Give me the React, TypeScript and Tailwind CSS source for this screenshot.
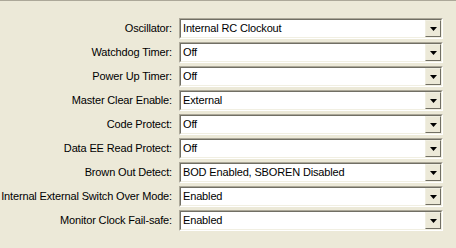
const rows: [string, string][] = [
  ['Oscillator:', 'Internal RC Clockout'],
  ['Watchdog Timer:', 'Off'],
  ['Power Up Timer:', 'Off'],
  ['Master Clear Enable:', 'External'],
  ['Code Protect:', 'Off'],
  ['Data EE Read Protect:', 'Off'],
  ['Brown Out Detect:', 'BOD Enabled, SBOREN Disabled'],
  ['Internal External Switch Over Mode:', 'Enabled'],
  ['Monitor Clock Fail-safe:', 'Enabled'],
]

function Combo({ value }: { value: string }) {
  return (
    <div className="w-[264px] h-[21px] border border-t-[#ACA899] border-l-[#ACA899] border-b-white border-r-white">
      <div className="h-full flex bg-white border border-t-[#716F64] border-l-[#716F64] border-b-[#F1EFE2] border-r-[#F1EFE2]">
        <div className="flex-1 pl-[2px] leading-[17px] whitespace-nowrap overflow-hidden">{value}</div>
        {/* dropdown button */}
        <div className="w-[16px] h-full bg-[#ECE9D8] border border-t-[#F1EFE2] border-l-[#F1EFE2] border-b-[#716F64] border-r-[#716F64] flex items-center justify-center">
          <svg width="7" height="4" viewBox="0 0 7 4">
            <path d="M0 0h7L3.5 4z" fill="#000" />
          </svg>
        </div>
      </div>
    </div>
  )
}

export default function App() {
  return (
    <div
      className="w-[456px] h-[248px] bg-[#ECE9D8] border-t border-[#ACA899] text-[11px] tracking-[-0.15px] text-black flex flex-col gap-[3px] pt-[17px]"
      style={{ fontFamily: '"Liberation Sans", Arial, sans-serif' }}
    >
      {rows.map(([label, value]) => (
        <div key={label} className="flex items-center">
          <div className="w-[172px] text-right whitespace-nowrap">{label}</div>
          <div className="ml-[7px]">
            <Combo value={value} />
          </div>
        </div>
      ))}
    </div>
  )
}
